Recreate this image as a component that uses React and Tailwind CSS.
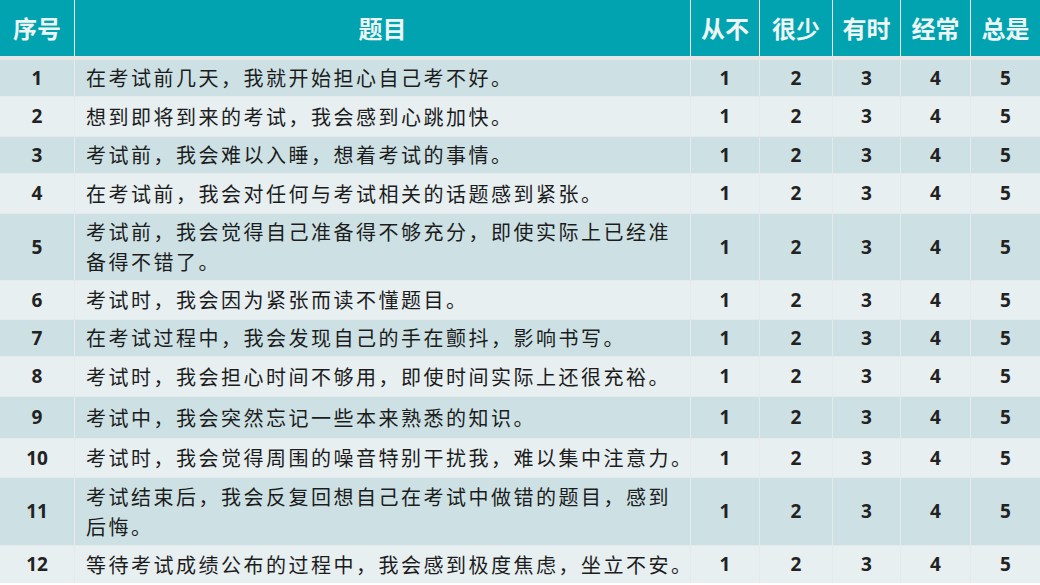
import React from "react";

const rows = [
  { n: 1, h: "h-[36px]", t: ["在考试前几天，我就开始担心自己考不好。"] },
  { n: 2, h: "h-[39px]", t: ["想到即将到来的考试，我会感到心跳加快。"] },
  { n: 3, h: "h-[36px]", t: ["考试前，我会难以入睡，想着考试的事情。"] },
  { n: 4, h: "h-[39px]", t: ["在考试前，我会对任何与考试相关的话题感到紧张。"] },
  { n: 5, h: "h-[66px]", t: ["考试前，我会觉得自己准备得不够充分，即使实际上已经准", "备得不错了。"] },
  { n: 6, h: "h-[38px]", t: ["考试时，我会因为紧张而读不懂题目。"] },
  { n: 7, h: "h-[36px]", t: ["在考试过程中，我会发现自己的手在颤抖，影响书写。"] },
  { n: 8, h: "h-[39px]", t: ["考试时，我会担心时间不够用，即使时间实际上还很充裕。"] },
  { n: 9, h: "h-[41px]", t: ["考试中，我会突然忘记一些本来熟悉的知识。"] },
  { n: 10, h: "h-[38px]", t: ["考试时，我会觉得周围的噪音特别干扰我，难以集中注意力。"] },
  { n: 11, h: "h-[67px]", t: ["考试结束后，我会反复回想自己在考试中做错的题目，感到", "后悔。"] },
  { n: 12, h: "h-[37px]", t: ["等待考试成绩公布的过程中，我会感到极度焦虑，坐立不安。"] },
];

const heads = ["从不", "很少", "有时", "经常", "总是"];
const widths = ["w-[68px]", "w-[72px]", "w-[67px]", "w-[69px]", "flex-1"];

const cjk = "font-['Noto_Sans_CJK_SC',sans-serif]";
const num = "font-['Open_Sans','Noto_Sans_CJK_SC',sans-serif]";

export default function App() {
  return (
    <div className="w-[1040px] h-[585px] bg-white overflow-hidden">
      {/* header */}
      <div className={`flex h-[56px] gap-[1px] bg-[#eef3f3] ${cjk}`}>
        <div className="w-[74px] bg-[#00a3af] flex items-center justify-center text-[24px] font-bold text-[#edf5f5]">序号</div>
        <div className="w-[615px] bg-[#00a3af] flex items-center justify-center text-[24px] font-bold text-[#edf5f5]">题目</div>
        {heads.map((h, i) => (
          <div key={h} className={`${widths[i]} bg-[#00a3af] flex items-center justify-center text-[24px] font-bold text-[#edf5f5]`}>
            {h}
          </div>
        ))}
      </div>
      <div className="h-[4px] bg-[#e6e6e6]" />

      {/* body */}
      <div className="flex flex-col gap-[1px] bg-[#e4eaeb]">
        {rows.map((r, idx) => {
          const bg = idx % 2 === 0 ? "bg-[#cde1e4]" : "bg-[#e7eff1]";
          return (
            <div key={r.n} className={`flex gap-[1px] ${r.h}`}>
              <div className={`w-[74px] ${bg} flex items-center justify-center text-[19px] font-bold text-[#222] ${num}`}>{r.n}</div>
              <div className={`w-[615px] ${bg} flex flex-col justify-center pl-[11px] text-[20px] leading-[30px] tracking-[2.5px] text-[#1c1c1c] whitespace-nowrap ${cjk}`}>
                {r.t.map((line) => (
                  <span key={line}>{line}</span>
                ))}
              </div>
              {[1, 2, 3, 4, 5].map((v, i) => (
                <div key={v} className={`${widths[i]} ${bg} flex items-center justify-center text-[19px] font-bold text-[#222] ${num}`}>
                  {v}
                </div>
              ))}
            </div>
          );
        })}
      </div>
    </div>
  );
}
